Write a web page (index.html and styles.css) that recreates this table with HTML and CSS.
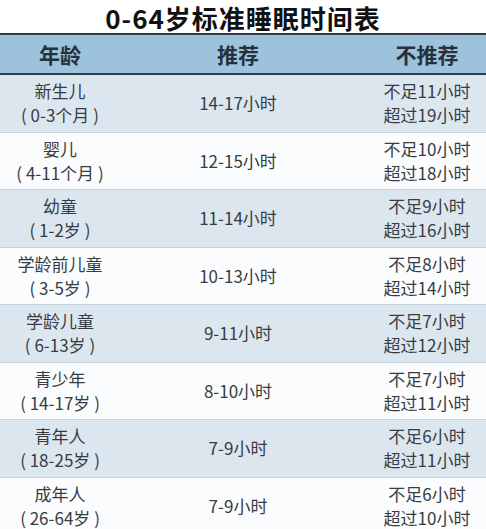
FILE: index.html
```html
<!DOCTYPE html>
<html lang="zh">
<head>
<meta charset="utf-8">
<title>0-64岁标准睡眠时间表</title>
<link rel="stylesheet" href="styles.css">
</head>
<body>
<div class="page">
  <h1 class="title">0-64岁标准睡眠时间表</h1>
  <div class="table">
    <div class="row head">
      <div class="cell c1">年龄</div>
      <div class="cell c2">推荐</div>
      <div class="cell c3">不推荐</div>
    </div>
    <div class="row odd">
      <div class="cell c1"><span>新生儿</span><span>( 0-3个月 )</span></div>
      <div class="cell c2">14-17小时</div>
      <div class="cell c3"><span>不足11小时</span><span>超过19小时</span></div>
    </div>
    <div class="row even">
      <div class="cell c1"><span>婴儿</span><span>( 4-11个月 )</span></div>
      <div class="cell c2">12-15小时</div>
      <div class="cell c3"><span>不足10小时</span><span>超过18小时</span></div>
    </div>
    <div class="row odd">
      <div class="cell c1"><span>幼童</span><span>( 1-2岁 )</span></div>
      <div class="cell c2">11-14小时</div>
      <div class="cell c3"><span>不足9小时</span><span>超过16小时</span></div>
    </div>
    <div class="row even">
      <div class="cell c1"><span>学龄前儿童</span><span>( 3-5岁 )</span></div>
      <div class="cell c2">10-13小时</div>
      <div class="cell c3"><span>不足8小时</span><span>超过14小时</span></div>
    </div>
    <div class="row odd">
      <div class="cell c1"><span>学龄儿童</span><span>( 6-13岁 )</span></div>
      <div class="cell c2">9-11小时</div>
      <div class="cell c3"><span>不足7小时</span><span>超过12小时</span></div>
    </div>
    <div class="row even">
      <div class="cell c1"><span>青少年</span><span>( 14-17岁 )</span></div>
      <div class="cell c2">8-10小时</div>
      <div class="cell c3"><span>不足7小时</span><span>超过11小时</span></div>
    </div>
    <div class="row odd">
      <div class="cell c1"><span>青年人</span><span>( 18-25岁 )</span></div>
      <div class="cell c2">7-9小时</div>
      <div class="cell c3"><span>不足6小时</span><span>超过11小时</span></div>
    </div>
    <div class="row even">
      <div class="cell c1"><span>成年人</span><span>( 26-64岁 )</span></div>
      <div class="cell c2">7-9小时</div>
      <div class="cell c3"><span>不足6小时</span><span>超过10小时</span></div>
    </div>
  </div>
</div>
</body>
</html>
```
FILE: styles.css
```css
html, body {
  margin: 0;
  padding: 0;
  background: #ffffff;
}
body {
  font-family: "Noto Sans CJK SC", "Noto Sans", sans-serif;
  color: #383c42;
}
.page {
  width: 486px;
  overflow: hidden;
}
.title {
  margin: 0;
  box-sizing: border-box;
  height: 33px;
  padding-top: 3px;
  line-height: 30px;
  font-size: 26px;
  font-weight: 700;
  letter-spacing: 1px;
  text-align: center;
  color: #111111;
}
.table {
  display: flex;
  flex-direction: column;
}
.row {
  display: grid;
  grid-template-columns: 120px 236px 130px;
  box-sizing: border-box;
}
.head {
  height: 42px;
  background: #9cc3db;
  border-top: 2px solid #2e3a47;
  border-bottom: 2px solid #2e3a47;
  font-size: 21px;
  font-weight: 700;
  color: #26313d;
}
.head .cell {
  justify-content: center;
}
.row.odd,
.row.even {
  height: 57.5px;
  border-bottom: 1px solid #c3d2de;
  font-size: 17px;
  line-height: 24px;
}
.row.odd {
  background: #dbe6ef;
}
.row.even {
  background: #fafcfd;
}
.cell {
  display: flex;
  flex-direction: column;
  align-items: center;
  justify-content: center;
  text-align: center;
  white-space: pre;
}
.c3 {
  padding-left: 12px;
}
```
